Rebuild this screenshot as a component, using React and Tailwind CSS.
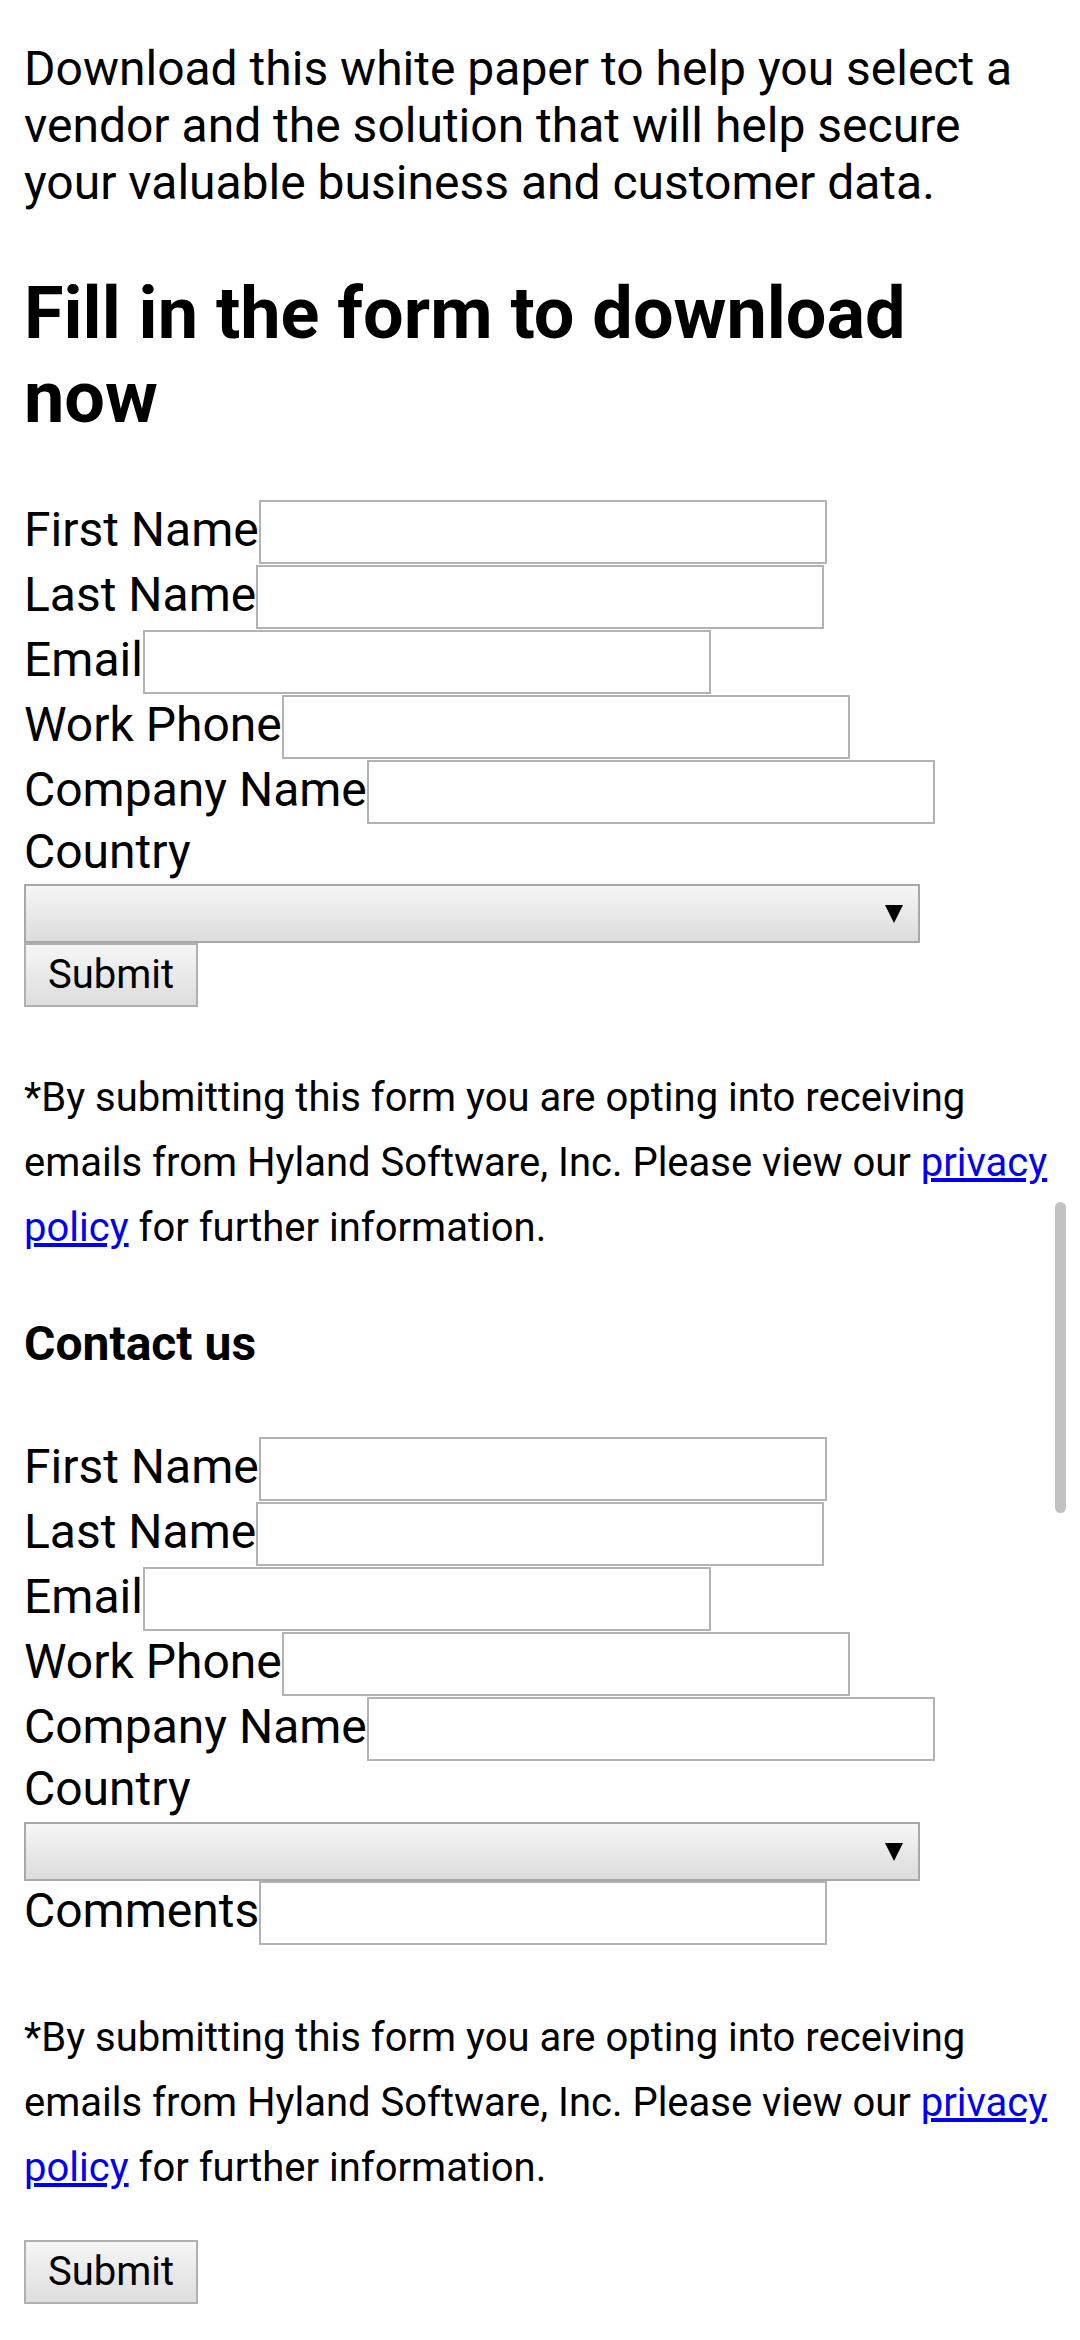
import React from 'react';

const fields = ['First Name', 'Last Name', 'Email', 'Work Phone', 'Company Name'];

const FieldRow = ({ label }) => (
  <div className="flex items-start h-[65px]">
    <label className="text-[48px] leading-[56px] pt-[2px] whitespace-nowrap">{label}</label>
    <input type="text" className="h-[64px] w-[568px] border-2 border-[#b3b3b3] bg-white outline-none" />
  </div>
);

const CountrySelect = () => (
  <div className="h-[59px] w-[896px] border-2 border-[#a8a8a8] bg-gradient-to-b from-[#f6f6f6] to-[#dcdcdc] flex items-center justify-end pr-[15px]">
    <svg width="18" height="18" viewBox="0 0 18 18">
      <polygon points="0,0 18,0 9,18" fill="#000" />
    </svg>
  </div>
);

const SubmitButton = () => (
  <button className="h-[64px] w-[174px] border-2 border-[#b0b0b0] bg-gradient-to-b from-[#f6f6f6] to-[#dddddd] text-[40px] leading-none text-black">
    Submit
  </button>
);

const Disclaimer = ({ className }) => (
  <p className={`text-[40px] leading-[65px] ${className}`}>
    *By submitting this form you are opting into receiving emails from Hyland Software, Inc. Please view our{' '}
    <a href="#" className="text-[#0000ee] underline">privacy policy</a> for further information.
  </p>
);

export default function App() {
  return (
    <div className="relative min-h-[2340px] bg-white text-black font-[Roboto,sans-serif] px-[24px] pt-[40px] pb-[37px]">
      <p className="text-[48px] leading-[57px] pr-[26px]">
        Download this white paper to help you select a vendor and the solution that will help secure your valuable business and customer data.
      </p>

      <h1 className="mt-[61px] text-[72px] font-bold leading-[84px]">Fill in the form to download now</h1>

      <form className="mt-[60px]">
        {fields.map((f) => (
          <FieldRow key={f} label={f} />
        ))}
        <div className="h-[59px] text-[48px] leading-[53px]">Country</div>
        <CountrySelect />
        <SubmitButton />
      </form>

      <Disclaimer className="mt-[58px]" />

      <h3 className="mt-[56px] text-[48px] font-bold leading-[56px]">Contact us</h3>

      <form className="mt-[65px]">
        {fields.map((f) => (
          <FieldRow key={f} label={f} />
        ))}
        <div className="h-[60px] text-[48px] leading-[53px]">Country</div>
        <CountrySelect />
        <FieldRow label="Comments" />
        <Disclaimer className="mt-[59px]" />
        <div className="mt-[40px]">
          <SubmitButton />
        </div>
      </form>

      <div className="absolute right-[14px] top-[1202px] w-[11px] h-[311px] rounded-full bg-[#c2c2c2]" />
    </div>
  );
}
